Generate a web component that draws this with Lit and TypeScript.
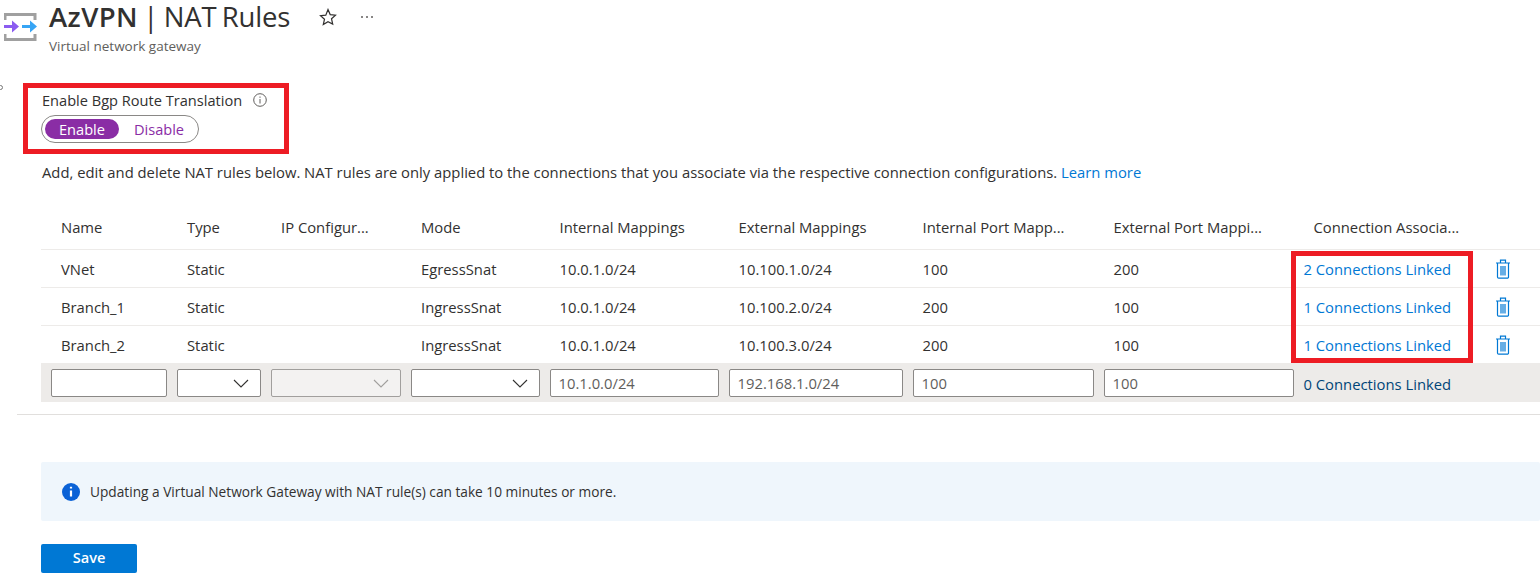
import { LitElement, html, css } from 'lit';
import { customElement } from 'lit/decorators.js';

const rows = [
  { name: 'VNet', mode: 'EgressSnat', ext: '10.100.1.0/24', ip: '100', ep: '200', conn: '2 Connections Linked' },
  { name: 'Branch_1', mode: 'IngressSnat', ext: '10.100.2.0/24', ip: '200', ep: '100', conn: '1 Connections Linked' },
  { name: 'Branch_2', mode: 'IngressSnat', ext: '10.100.3.0/24', ip: '200', ep: '100', conn: '1 Connections Linked' },
];

const chevron = html`<svg class="chev" width="16" height="9" viewBox="0 0 16 9"><path d="M1 1l7 7 7-7" fill="none" stroke="currentColor" stroke-width="1.1"/></svg>`;

const trash = html`<svg width="16" height="20" viewBox="0 0 16 20" fill="none" stroke="#0078d4" stroke-width="1.2">
  <path d="M1 4h14M5.500 4V1.200h5V4M2.500 4v14a1.200 1.200 0 0 0 1.200 1.200h8.600a1.200 1.200 0 0 0 1.200-1.200V4M6 7v9.500M8 7v9.500M10 7v9.500"/>
</svg>`;

@customElement('app-root')
export class AppRoot extends LitElement {
  static styles = css`
    :host {
      display: block;
      position: relative;
      height: 582px;
      overflow: hidden;
      background: #fff;
      color: #323130;
      font-family: 'Open Sans', 'Noto Sans', sans-serif;
      font-size: 14.8px;
    }
    .stray {
      position: absolute;
      left: -2px;
      top: 85px;
      width: 3px;
      height: 3px;
      border: 1px solid #777;
      border-radius: 50%;
    }
    .head {
      display: flex;
      height: 83px;
      padding-left: 4px;
      box-sizing: border-box;
    }
    .logo {
      margin-top: 12px;
      width: 33px;
      height: 30px;
      flex: none;
    }
    .titles {
      margin-left: 12px;
    }
    .title-row {
      display: flex;
      align-items: center;
      height: 34px;
    }
    h1 {
      margin: 0;
      font-size: 27.500px;
      font-weight: 400;
      line-height: 34px;
      white-space: nowrap;
      letter-spacing: -0.2px;
      word-spacing: -1.500px;
    }
    h1 b {
      font-weight: 600;
      letter-spacing: 0.4px;
    }
    .star {
      margin-left: 29px;
      width: 18px;
      height: 18px;
    }
    .more {
      margin-left: 23px;
      width: 14px;
      height: 4px;
    }
    .sub {
      margin-top: 3px;
      font-size: 13.500px;
      line-height: 18px;
      color: #605e5c;
    }
    .bgp {
      margin-left: 23px;
      width: 266px;
      height: 71px;
      box-sizing: border-box;
      border: 5px solid #ed1c24;
      padding: 2px 0 0 14px;
    }
    .bgp-label {
      display: flex;
      align-items: center;
      height: 20px;
      line-height: 20px;
      font-size: 14.600px;
    }
    .bgp-label svg {
      margin-left: 11px;
    }
    .toggle {
      display: flex;
      align-items: center;
      width: 158px;
      height: 28px;
      margin: 5px 0 0 -1px;
      box-sizing: border-box;
      border: 1px solid #8a8886;
      border-radius: 14px;
      padding: 0 3px;
    }
    .on,
    .off {
      height: 20px;
      line-height: 20px;
      text-align: center;
      font-size: 14.600px;
    }
    .on {
      width: 74px;
      flex: none;
      border-radius: 10px;
      background: #8a2da5;
      color: #fff;
    }
    .off {
      flex: none;
      width: 76px;
      padding-left: 2px;
      color: #8a2da5;
    }
    .desc {
      margin: 8px 0 0 42px;
      height: 20px;
      line-height: 20px;
      white-space: nowrap;
    }
    a {
      color: #0078d4;
      text-decoration: none;
    }
    .table {
      position: relative;
      margin: 23px 0 0 41px;
    }
    .row {
      display: grid;
      grid-template-columns: 116px 84px 130px 128.500px 169px 174px 181px 190px 181px 16px;
      column-gap: 10px;
      align-items: center;
      padding-left: 10px;
      height: 38px;
      box-sizing: border-box;
      border-bottom: 1px solid #edebe9;
      white-space: nowrap;
    }
    .row > span {
      padding-left: 10px;
      overflow: hidden;
      text-overflow: ellipsis;
    }
    .row > svg {
      display: block;
    }
    .header {
      height: 45px;
      font-weight: 500;
    }
    .edit {
      height: 38px;
      background: #edebe9;
      border-bottom: 0;
    }
    .field {
      display: flex;
      align-items: center;
      justify-content: flex-end;
      height: 28px;
      box-sizing: border-box;
      border: 1px solid #8a8886;
      border-radius: 2px;
      background: #fff;
      color: #323130;
    }
    .field.text {
      justify-content: flex-start;
      padding-left: 8px;
      color: #605e5c;
    }
    .field.disabled {
      background: #f3f2f1;
      border-color: #a19f9d;
      color: #a19f9d;
    }
    .chev {
      margin-right: 11px;
    }
    .edit .linked {
      padding-top: 2px;
      color: #004578;
    }
    .outline {
      position: absolute;
      left: 1250px;
      top: 46px;
      width: 182px;
      height: 112px;
      box-sizing: border-box;
      border: 5px solid #ed1c24;
      pointer-events: none;
    }
    .rule {
      margin: 12px 0 0 17px;
      border-top: 1px solid #e1dfdd;
    }
    .note {
      display: flex;
      align-items: center;
      margin: 47px 0 0 41px;
      height: 59px;
      padding-left: 21px;
      border-radius: 2px;
      background: #eff6fc;
      font-size: 13.700px;
      color: #323130;
    }
    .note svg {
      margin-right: 10px;
      flex: none;
    }
    .save {
      display: block;
      margin: 23px 0 0 41px;
      width: 96px;
      height: 29px;
      padding: 0 0 3px;
      border: 0;
      border-radius: 2px;
      background: #0078d4;
      color: #fff;
      font: 600 14.600px 'Open Sans', 'Noto Sans', sans-serif;
    }
  `;

  render() {
    return html`
      <div class="stray"></div>
      <div class="head">
        <svg class="logo" viewBox="0 0 33 30">
          <path d="M1 8V2.500h30V8M1 22v5.500h30V22" fill="none" stroke="#a0a0a0" stroke-width="3"/>
          <path d="M0 13h8V8.500l7 6-7 6V16H0z" fill="#8b5cf0"/>
          <path d="M18 13h8V8.500l7 6-7 6V16h-8z" fill="#37a5f5"/>
        </svg>
        <div class="titles">
          <div class="title-row">
            <h1><b>AzVPN</b> | NAT Rules</h1>
            <svg class="star" viewBox="0 0 18 18"><path d="M9 1.500l2.200 5.100 5.300.5-4 3.600 1.200 5.400L9 13.800l-4.700 2.800 1.200-5.400-4-3.600 5.300-.5z" fill="none" stroke="#323130" stroke-width="1.200"/></svg>
            <svg class="more" viewBox="0 0 14 4" fill="#605e5c"><circle cx="2" cy="2" r="1"/><circle cx="7" cy="2" r="1"/><circle cx="12" cy="2" r="1"/></svg>
          </div>
          <div class="sub">Virtual network gateway</div>
        </div>
      </div>

      <div class="bgp">
        <div class="bgp-label">
          Enable Bgp Route Translation
          <svg width="14" height="14" viewBox="0 0 14 14" fill="none" stroke="#605e5c"><circle cx="7" cy="7" r="6.300"/><path d="M7 6v4.500M7 3.500v1.300"/></svg>
        </div>
        <div class="toggle"><div class="on">Enable</div><div class="off">Disable</div></div>
      </div>

      <div class="desc">Add, edit and delete NAT rules below. NAT rules are only applied to the connections that you associate via the respective connection configurations. <a>Learn more</a></div>

      <div class="table">
        <div class="row header">
          <span>Name</span><span>Type</span><span>IP Configur...</span><span>Mode</span><span>Internal Mappings</span><span>External Mappings</span><span>Internal Port Mapp...</span><span>External Port Mappi...</span><span>Connection Associa...</span>
        </div>
        ${rows.map(
          (r) => html`<div class="row">
            <span>${r.name}</span><span>Static</span><span></span><span>${r.mode}</span><span>10.0.1.0/24</span><span>${r.ext}</span><span>${r.ip}</span><span>${r.ep}</span>
            <a>${r.conn}</a>
            ${trash}
          </div>`
        )}
        <div class="row edit">
          <div class="field"></div>
          <div class="field">${chevron}</div>
          <div class="field disabled">${chevron}</div>
          <div class="field">${chevron}</div>
          <div class="field text">10.1.0.0/24</div>
          <div class="field text">192.168.1.0/24</div>
          <div class="field text">100</div>
          <div class="field text">100</div>
          <a class="linked">0 Connections Linked</a>
        </div>
        <div class="outline"></div>
      </div>

      <div class="rule"></div>

      <div class="note">
        <svg width="18" height="18" viewBox="0 0 18 18"><circle cx="9" cy="9" r="9" fill="#0b62d6"/><path d="M9 7.500v6M9 3.800v1.800" stroke="#fff" stroke-width="2.200"/></svg>
        Updating a Virtual Network Gateway with NAT rule(s) can take 10 minutes or more.
      </div>

      <button class="save">Save</button>
    `;
  }
}
